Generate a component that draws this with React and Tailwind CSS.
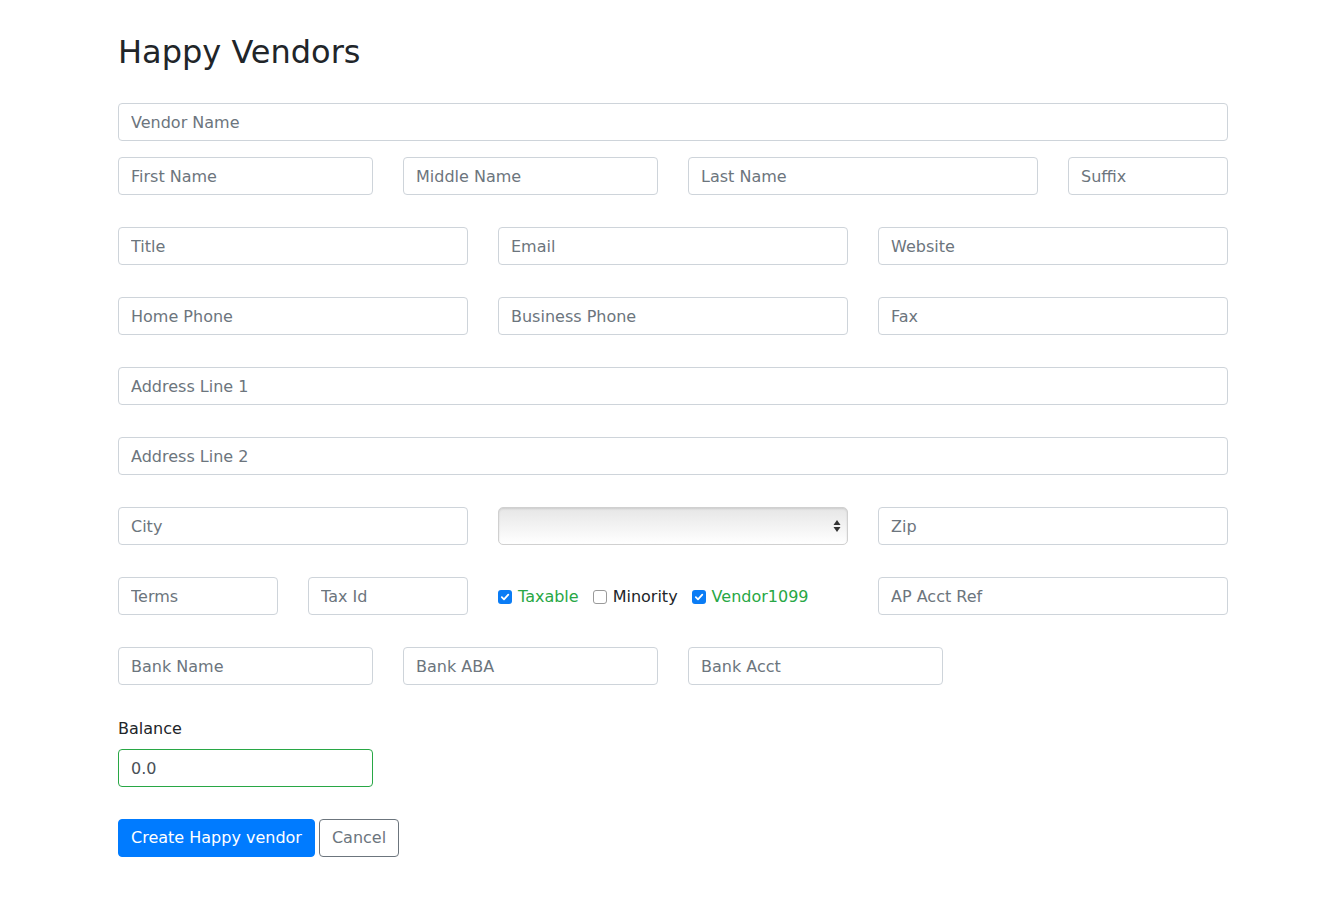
import React from "react";

const inputCls =
  "block w-full h-[38px] px-3 border border-[#ced4da] rounded-[4px] bg-white text-[16px] text-[#495057] placeholder:text-[#6c757d] outline-none";

function Input({ ph, cls = "", value }) {
  return <input className={inputCls + " " + cls} placeholder={ph} defaultValue={value} />;
}

function Check({ checked, label, color }) {
  return (
    <label className="flex items-center gap-[6px]">
      {checked ? (
        <span className="w-[14px] h-[14px] rounded-[3px] bg-[#0a7cf5] flex items-center justify-center">
          <svg width="10" height="10" viewBox="0 0 10 10">
            <path d="M1.8 5.2 L4 7.4 L8.3 2.6" fill="none" stroke="white" strokeWidth="1.8" strokeLinecap="round" strokeLinejoin="round" />
          </svg>
        </span>
      ) : (
        <span className="w-[14px] h-[14px] rounded-[3px] border border-[#9a9a9a] bg-white" />
      )}
      <span className={color}>{label}</span>
    </label>
  );
}

export default function App() {
  return (
    <div className="min-h-[902px] bg-white" style={{ fontFamily: '"DejaVu Sans", sans-serif' }}>
      <div className="w-[1110px] ml-[118px] pt-[33px]">
        <h2 className="text-[32px] leading-[1.2] text-[#212529] font-normal mb-[32px]">Happy Vendors</h2>
        <div className="mb-4">
          <Input ph="Vendor Name" />
        </div>
        <div className="grid grid-cols-12 gap-x-[30px] gap-y-[32px]">
          <div className="col-span-3"><Input ph="First Name" /></div>
          <div className="col-span-3"><Input ph="Middle Name" /></div>
          <div className="col-span-4"><Input ph="Last Name" /></div>
          <div className="col-span-2"><Input ph="Suffix" /></div>

          <div className="col-span-4"><Input ph="Title" /></div>
          <div className="col-span-4"><Input ph="Email" /></div>
          <div className="col-span-4"><Input ph="Website" /></div>

          <div className="col-span-4"><Input ph="Home Phone" /></div>
          <div className="col-span-4"><Input ph="Business Phone" /></div>
          <div className="col-span-4"><Input ph="Fax" /></div>

          <div className="col-span-12"><Input ph="Address Line 1" /></div>
          <div className="col-span-12"><Input ph="Address Line 2" /></div>

          <div className="col-span-4"><Input ph="City" /></div>
          <div className="col-span-4">
            <div className="h-[38px] rounded-[5px] border border-[#d0d0d0] bg-[linear-gradient(to_bottom,#e6e6e6,#f4f4f4_55%,#ffffff)] shadow-[inset_0_1px_2px_rgba(0,0,0,0.12)] flex items-center justify-end pr-[6px]">
              <svg width="8" height="14" viewBox="0 0 8 14">
                <path d="M4 1 L7.5 6 L0.5 6 Z" fill="#333" />
                <path d="M4 13 L7.5 8 L0.5 8 Z" fill="#333" />
              </svg>
            </div>
          </div>
          <div className="col-span-4"><Input ph="Zip" /></div>

          <div className="col-span-2"><Input ph="Terms" /></div>
          <div className="col-span-2"><Input ph="Tax Id" /></div>
          <div className="col-span-4 flex items-center gap-[14px] text-[16px] pt-[1px]">
            <Check checked label="Taxable" color="text-[#28a745]" />
            <Check label="Minority" color="text-[#212529]" />
            <Check checked label="Vendor1099" color="text-[#28a745]" />
          </div>
          <div className="col-span-4"><Input ph="AP Acct Ref" /></div>

          <div className="col-span-3"><Input ph="Bank Name" /></div>
          <div className="col-span-3"><Input ph="Bank ABA" /></div>
          <div className="col-span-3"><Input ph="Bank Acct" /></div>
        </div>
        <div className="mt-[32px] w-[255px]">
          <div className="text-[16px] text-[#212529] leading-[24px] mb-[8px]">Balance</div>
          <Input value="0.0" cls="!border-[#28a745]" />
        </div>
        <div className="mt-[32px] flex gap-[4px]">
          <button className="h-[38px] px-3 rounded-[4px] bg-[#007bff] border border-[#007bff] text-white text-[16px]">Create Happy vendor</button>
          <button className="h-[38px] px-3 rounded-[4px] bg-white border border-[#6c757d] text-[#6c757d] text-[16px]">Cancel</button>
        </div>
      </div>
    </div>
  );
}
